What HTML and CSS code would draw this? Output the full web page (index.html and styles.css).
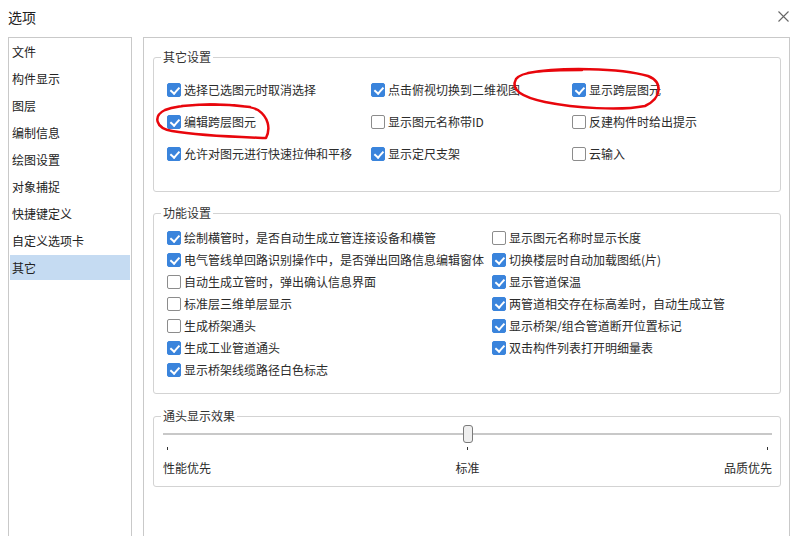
FILE: index.html
```html
<!DOCTYPE html>
<html lang="zh-CN">
<head>
<meta charset="utf-8">
<title>选项</title>
<link rel="stylesheet" href="styles.css">
</head>
<body>
<div class="titlebar">
  <div class="title">选项</div>
  <svg class="close" width="11" height="11" viewBox="0 0 11 11"><path d="M0.5 0.5 L10.5 10.5 M10.5 0.5 L0.5 10.5" stroke="#666" stroke-width="1.1" fill="none"/></svg>
</div>
<div class="main">
  <div class="sidebar">
    <div class="nav-item">文件</div>
    <div class="nav-item">构件显示</div>
    <div class="nav-item">图层</div>
    <div class="nav-item">编制信息</div>
    <div class="nav-item">绘图设置</div>
    <div class="nav-item">对象捕捉</div>
    <div class="nav-item">快捷键定义</div>
    <div class="nav-item">自定义选项卡</div>
    <div class="nav-item active">其它</div>
  </div>
  <div class="panel">
    <fieldset class="group">
      <legend>其它设置</legend>
      <div class="grid-other">
        <label class="cb"><span class="box on"></span>选择已选图元时取消选择</label>
        <label class="cb"><span class="box on"></span>点击俯视切换到二维视图</label>
        <label class="cb"><span class="box on"></span>显示跨层图元</label>
        <label class="cb"><span class="box on"></span>编辑跨层图元</label>
        <label class="cb"><span class="box"></span>显示图元名称带ID</label>
        <label class="cb"><span class="box"></span>反建构件时给出提示</label>
        <label class="cb"><span class="box on"></span>允许对图元进行快速拉伸和平移</label>
        <label class="cb"><span class="box on"></span>显示定尺支架</label>
        <label class="cb"><span class="box"></span>云输入</label>
      </div>
    </fieldset>
    <fieldset class="group group-func">
      <legend>功能设置</legend>
      <div class="grid-func">
        <label class="cb"><span class="box on"></span>绘制横管时，是否自动生成立管连接设备和横管</label>
        <label class="cb"><span class="box"></span>显示图元名称时显示长度</label>
        <label class="cb"><span class="box on"></span>电气管线单回路识别操作中，是否弹出回路信息编辑窗体</label>
        <label class="cb"><span class="box on"></span>切换楼层时自动加载图纸(片)</label>
        <label class="cb"><span class="box"></span>自动生成立管时，弹出确认信息界面</label>
        <label class="cb"><span class="box on"></span>显示管道保温</label>
        <label class="cb"><span class="box"></span>标准层三维单层显示</label>
        <label class="cb"><span class="box on"></span>两管道相交存在标高差时，自动生成立管</label>
        <label class="cb"><span class="box"></span>生成桥架通头</label>
        <label class="cb"><span class="box on"></span>显示桥架/组合管道断开位置标记</label>
        <label class="cb"><span class="box on"></span>生成工业管道通头</label>
        <label class="cb"><span class="box on"></span>双击构件列表打开明细量表</label>
        <label class="cb"><span class="box on"></span>显示桥架线缆路径白色标志</label>
      </div>
    </fieldset>
    <fieldset class="group group-slider">
      <legend>通头显示效果</legend>
      <div class="slider-wrap">
        <div class="slider">
          <div class="track"></div>
          <div class="thumb"></div>
        </div>
        <div class="ticks"><span></span><span></span><span></span></div>
        <div class="slider-labels"><span>性能优先</span><span>标准</span><span>品质优先</span></div>
      </div>
    </fieldset>
  </div>
</div>
<svg class="marks" width="792" height="536" viewBox="0 0 792 536">
  <path d="M250 107 C215 103 180 104 165 110 C153 116 155 128 172 131 C200 136 240 137 266 138 C271 128 268 117 258 110 C245 103 205 104 182 106" />
  <path d="M528 73 C560 67 620 68 648 76 C663 82 662 98 645 106 C620 111 575 108 545 102 C522 97 510 90 516 79 C521 72 540 70 582 70" />
</svg>
</body>
</html>
```

FILE: styles.css
```css
html, body {
  margin: 0;
  padding: 0;
}
body {
  position: relative;
  width: 792px;
  height: 536px;
  overflow: hidden;
  background: #ffffff;
  font-family: "Noto Sans CJK SC", "Microsoft YaHei", sans-serif;
  font-size: 12px;
  color: #2b2b2b;
}
.titlebar {
  height: 37px;
  display: flex;
  justify-content: space-between;
  align-items: flex-start;
  padding: 0 3px 0 8px;
  box-sizing: border-box;
}
.title {
  font-size: 14px;
  line-height: 20px;
  padding-top: 7px;
  color: #222;
}
.close {
  margin-top: 11px;
  display: block;
}
.main {
  display: flex;
  gap: 11px;
  padding-left: 8px;
}
.sidebar {
  width: 124px;
  height: 510px;
  border: 1px solid #c9c9c9;
  box-sizing: border-box;
  padding: 1px 1px;
}
.nav-item {
  height: 25px;
  line-height: 25px;
  margin-bottom: 2px;
  padding-left: 2px;
  color: #222;
}
.nav-item.active {
  background: #c5dbf2;
}
.panel {
  width: 647px;
  height: 510px;
  border: 1px solid #c9c9c9;
  box-sizing: border-box;
  padding: 11px 8px 0 9px;
}
.group {
  margin: 0;
  padding: 0;
  border: 1px solid #d3d3d3;
  border-radius: 3px;
  min-width: 0;
}
.group legend {
  margin-left: 7px;
  padding: 0 2px;
  line-height: 16px;
  font-size: 12px;
  color: #333;
}
.group-func {
  margin-top: 13px;
}
.group-slider {
  margin-top: 14px;
}
.grid-other {
  display: grid;
  grid-template-columns: 204px 201px 1fr;
  grid-auto-rows: 32px;
  align-items: center;
  padding: 9px 0 21px 13px;
}
.grid-func {
  display: grid;
  grid-template-columns: 325px 1fr;
  grid-auto-rows: 22px;
  align-items: center;
  padding: 6px 0 12px 13px;
}
.cb {
  display: flex;
  align-items: center;
  line-height: 16px;
  white-space: nowrap;
  color: #2b2b2b;
}
.box {
  position: relative;
  width: 14px;
  height: 14px;
  box-sizing: border-box;
  border: 1px solid #8c8c8c;
  border-radius: 2px;
  background: #fff;
  margin-right: 3px;
  flex: none;
}
.box.on {
  background: #3a84dc;
  border-color: #3a84dc;
}
.box.on::after {
  content: "";
  position: absolute;
  left: 3.5px;
  top: 1px;
  width: 3.5px;
  height: 7px;
  border-right: 2px solid #fff;
  border-bottom: 2px solid #fff;
  transform: rotate(42deg);
}
.slider-wrap {
  padding: 1px 8px 10px 9px;
}
.slider {
  position: relative;
  height: 20px;
}
.track {
  position: absolute;
  left: 0;
  right: 0;
  top: 8px;
  height: 2px;
  background: #c8c8c8;
}
.thumb {
  position: absolute;
  left: 50%;
  top: 0;
  width: 10px;
  height: 18px;
  margin-left: -5px;
  box-sizing: border-box;
  border: 1px solid #7b7b7b;
  border-radius: 3px;
  background: #efefef;
}
.ticks {
  display: flex;
  justify-content: space-between;
  padding: 0 4px;
  margin-top: 2px;
  height: 3px;
}
.ticks span {
  width: 1px;
  height: 3px;
  background: #333;
}
.slider-labels {
  display: flex;
  justify-content: space-between;
  margin-top: 10px;
  line-height: 16px;
  color: #2b2b2b;
}
.marks {
  position: absolute;
  left: 0;
  top: 0;
  pointer-events: none;
}
.marks path {
  fill: none;
  stroke: #e8060c;
  stroke-width: 2.5;
  stroke-linecap: round;
  stroke-linejoin: round;
}
```
